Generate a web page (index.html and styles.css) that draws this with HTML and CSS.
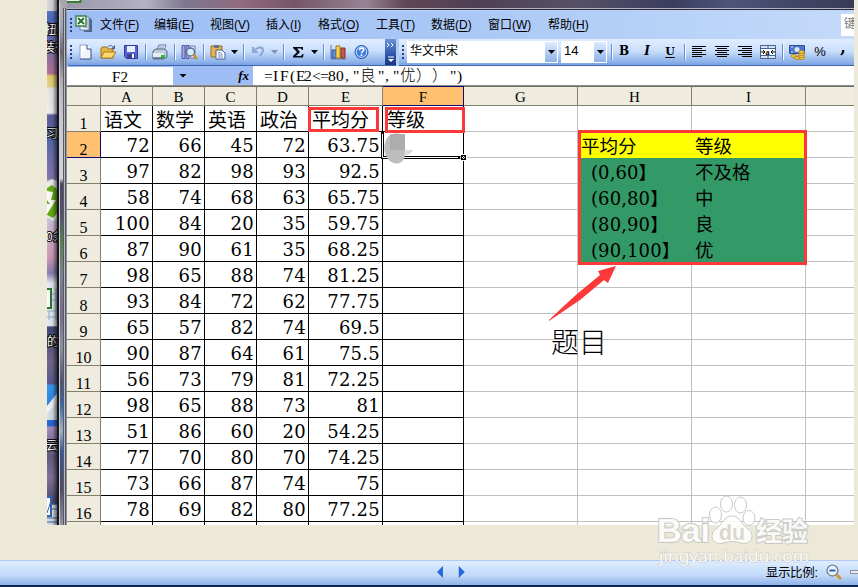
FILE: index.html
```html
<!DOCTYPE html>
<html lang="zh-CN">
<head>
<meta charset="utf-8">
<title>Excel</title>
<link rel="stylesheet" href="styles.css">
</head>
<body>
<div class="shot">
  <svg class="desktop" width="20" height="525" viewBox="47 0 20 525">
    <defs>
      <linearGradient id="dk" x1="0" y1="0" x2="0" y2="1">
        <stop offset="0" stop-color="#d8d7dc"/><stop offset=".02" stop-color="#dad9dd"/><stop offset=".022" stop-color="#5874c8"/><stop offset=".05" stop-color="#4868b4"/><stop offset=".09" stop-color="#7a6eae"/><stop offset=".14" stop-color="#b77598"/><stop offset=".145" stop-color="#e6cf6e"/><stop offset=".165" stop-color="#e6d684"/><stop offset=".168" stop-color="#e8e8e8"/><stop offset=".215" stop-color="#f2f2f2"/><stop offset=".22" stop-color="#6360a0"/><stop offset=".26" stop-color="#5368a8"/><stop offset=".34" stop-color="#8878b0"/><stop offset=".35" stop-color="#dfdce8"/><stop offset=".42" stop-color="#cfc4dc"/><stop offset=".49" stop-color="#d29cb8"/><stop offset=".52" stop-color="#8b80b4"/><stop offset=".54" stop-color="#e8eef5"/><stop offset=".62" stop-color="#e4edf4"/><stop offset=".623" stop-color="#444c7c"/><stop offset=".69" stop-color="#74688f"/><stop offset=".73" stop-color="#5c5b93"/><stop offset=".735" stop-color="#379bf2"/><stop offset=".81" stop-color="#2766d8"/><stop offset=".814" stop-color="#a590c0"/><stop offset=".87" stop-color="#675d85"/><stop offset=".91" stop-color="#84759d"/><stop offset=".96" stop-color="#4c4969"/><stop offset=".963" stop-color="#e0e9f0"/><stop offset="1" stop-color="#d4dde8"/>
      </linearGradient>
      <linearGradient id="glass" x1="0" y1="0" x2="0" y2="1">
        <stop offset="0" stop-color="#bab5bb"/><stop offset=".05" stop-color="#a4a4b4"/><stop offset=".1" stop-color="#70656e"/><stop offset=".16" stop-color="#b8b4b8"/><stop offset=".23" stop-color="#c8c9cf"/><stop offset=".34" stop-color="#d3d3da"/><stop offset=".35" stop-color="#4c4664"/><stop offset=".41" stop-color="#55506c"/><stop offset=".46" stop-color="#568249"/><stop offset=".52" stop-color="#7c8190"/><stop offset=".6" stop-color="#78698b"/><stop offset=".66" stop-color="#8c929c"/><stop offset=".73" stop-color="#535073"/><stop offset=".77" stop-color="#3b69a6"/><stop offset=".82" stop-color="#9fb1c0"/><stop offset=".86" stop-color="#36589a"/><stop offset=".93" stop-color="#54495f"/><stop offset="1" stop-color="#9298a0"/>
      </linearGradient>
      <linearGradient id="shade" x1="0" x2="1"><stop offset="0" stop-color="#000" stop-opacity="0"/><stop offset=".5" stop-color="#000" stop-opacity=".08"/><stop offset="1" stop-color="#000" stop-opacity=".65"/></linearGradient>
    </defs>
    <rect x="47" width="11" height="525" fill="url(#dk)"/>
    <path d="M47 182l5-3 6 3v36l-5 3-6-4z" fill="#eef3ec"/>
    <path d="M47 188l5-3 6 5v22l-5 6-6-3z" fill="#66b017"/>
    <path d="M47 191l6 1-2 8h5l-9 14v-10h3l-3-4z" fill="#fff"/>
    <path d="M47 289h4v19h-4" fill="#fff" stroke="#2b7b33" stroke-width="2"/>
    <path d="M52 294h6M52 300h6M47 311h11M47 317h11M56 288v32M49 311v9" stroke="#93b4d2" fill="none"/>
    <path d="M47 410l11-15v25H47z" fill="#d6e3eb"/><path d="M47 406l11-14v8l-11 14z" fill="#f4f7f9"/>
    <path d="M47 497h4v19h-4" fill="#fff" stroke="#3764ba" stroke-width="2"/>
    <path d="M47 513l4-12M52 503h6M52 509h6M47 518h11M47 522h11" stroke="#3e64a5" fill="none"/>
    <g class="desk-label"><text x="45" y="34">扭环</text><text x="43" y="52">装行</text><text x="46" y="138">习</text><text x="46" y="241">0条</text><text x="47" y="346">的</text><text x="46" y="450">云</text></g>
    <rect x="47" width="11" height="525" fill="url(#shade)"/>
    <rect x="57" width="2" height="525" fill="#171820"/>
    <rect x="59" width="4" height="525" fill="url(#glass)"/>
    <path d="M59.5 0v525" stroke="#c9cbd1"/><path d="M63.5 0v525" stroke="#555a66"/>
    <path d="M64.5 0v525" stroke="#b9bbc2"/><path d="M65.5 8v517" stroke="#525560"/><path d="M66.5 8v517" stroke="#93949b"/>
    <path d="M59 0h8v8h-4z" fill="#aaa4ae"/>
  </svg>
  <main class="app">
    <div class="title"><svg width="20" height="4" viewBox="0 0 20 4"><path d="M0 0h14v3H0z" fill="#e5efe5"/><path d="M0 2h14M13.5 0v3" stroke="#397c38" stroke-width="2"/></svg></div>
    <div class="menu">
      <i class="grip"></i>
      <svg class="book" width="18" height="18" viewBox="0 0 18 18"><path d="M7 3h8l2 2v12H9z" fill="#4c668a"/><path d="M5 2h9v13H5z" fill="#eaf0f6" stroke="#7288a8"/><path d="M10 5h3M10 7h3M10 9h3M8 12h5" stroke="#7892b8"/><path d="M1 1h10v10H1z" fill="#fff" stroke="#3d8044" stroke-width="1.4"/><path d="M3 3l6 6M9 3L3 9" stroke="#277634" stroke-width="2"/></svg>
      <nav><span>文件(<u>F</u>)</span><span>编辑(<u>E</u>)</span><span>视图(<u>V</u>)</span><span>插入(<u>I</u>)</span><span>格式(<u>O</u>)</span><span>工具(<u>T</u>)</span><span>数据(<u>D</u>)</span><span>窗口(<u>W</u>)</span><span>帮助(<u>H</u>)</span></nav>
      <div class="ask">键</div>
    </div>
    <div class="bars">
      <div class="bar standard">
        <i class="grip"></i>
        <svg class="ic first" viewBox="0 0 16 16"><path d="M3 1h7l4 4v10H3z" fill="#fff"/><path d="M3 15V1h7" stroke="#8da3c7" fill="none"/><path d="M10 1v4h4v10H3" stroke="#334d7d" fill="#dbe6f5" fill-opacity=".4"/></svg>
        <svg class="ic" viewBox="0 0 16 16"><path d="M1 4l2-1h4l1 2h5v9H1z" fill="#e5b83f" stroke="#9b701d"/><path d="M1 14l3-6h12l-4 6z" fill="#fbd96d" stroke="#a57a20"/><path d="M8 3c2-2 4-2 5 0" stroke="#46618b" fill="none"/><path d="M15 1v4h-4z" fill="#46618b"/></svg>
        <svg class="ic" viewBox="0 0 16 16"><path d="M1.500 1.500h13v13h-11l-2-2z" fill="#5964d2" stroke="#3039a0"/><path d="M4 2h8v6H4z" fill="#e9edfa"/><path d="M4 10h8v4H4z" fill="#37438c"/><path d="M9 10h2v4H9z" fill="#fff"/></svg>
        <i class="sep"></i>
        <svg class="ic" viewBox="0 0 16 16"><path d="M5 6l2-5h7l-2 5" fill="#fff" stroke="#61779e"/><path d="M7 3h5M6 5h5" stroke="#7892bf"/><path d="M1 7l3-2h9l2 2v6l-3 2H1z" fill="#bdc8d9" stroke="#56667f"/><path d="M1 9h11v4H1z" fill="#e8ecf2"/><path d="M9 11h4v3H9z" fill="#1fc02a"/><path d="M2 14h9" stroke="#3f5068"/></svg>
        <i class="sep"></i>
        <svg class="ic" viewBox="0 0 16 16"><path d="M1 1.500h3v13H1zM5 1.500h3v13H5z" fill="#a3a6de" stroke="#5459a5"/><path d="M8 2h6v12H8z" fill="#eef2fa" stroke="#6a75aa"/><circle cx="9.500" cy="8" r="4" fill="#d4ebfb" stroke="#536b93" stroke-width="1.300"/><path d="M12 10.500l4 4.500" stroke="#c58e23" stroke-width="2.500"/></svg>
        <i class="sep"></i>
        <svg class="ic" viewBox="0 0 16 16"><path d="M1 2h11v11H1z" fill="#e6b449" stroke="#987027"/><path d="M4 1h5v3H4z" fill="#67718b"/><path d="M6 6h6l3 3v6H6z" fill="#fff" stroke="#466195"/><path d="M8 9h4M8 11h5M8 13h5" stroke="#6c8bc2"/></svg>
        <i class="car"></i><i class="sep"></i>
        <svg class="ic" viewBox="0 0 16 16"><path d="M3 3v5h5M4 7c3-4 8-5 9-1 0 3-2 4-3 6" fill="none" stroke="#8ea9d4" stroke-width="2.200"/></svg>
        <i class="car off"></i><i class="sep"></i>
        <svg class="ic" viewBox="0 0 16 16"><path d="M3 3h10v3h-1l-1-1.500H7L10 8l-4 4h5l1.500-2h1L13 13.500H3V12l4-4-4-4z" fill="#070b19"/></svg>
        <i class="car"></i><i class="sep"></i>
        <svg class="ic" viewBox="0 0 16 16"><path d="M1 1v14h15" stroke="#5c739c" fill="none"/><path d="M2 6h4v8H2z" fill="#5791df" stroke="#2856a3"/><path d="M6 2h4v12H6z" fill="#f7d34c" stroke="#9b7721"/><path d="M11 4h4v10h-4z" fill="#cf574a" stroke="#823028"/></svg>
        <svg class="ic" viewBox="0 0 16 16"><circle cx="8.500" cy="8" r="6.500" fill="#397ce2" stroke="#2456a7"/><circle cx="8.500" cy="8" r="5.300" fill="none" stroke="#d8e9ff"/><path d="M6.500 6.200c0-3 4.200-2.600 4.200-.3 0 1.500-2.200 1.500-2.200 3.300M8.500 10.300v1.700" stroke="#fff" stroke-width="1.700" fill="none"/></svg>
        <div class="more"><svg width="11" height="26" viewBox="0 0 11 26"><path d="M2 4l2 2-2 2M6 4l2 2-2 2" stroke="#fff" fill="none"/><path d="M3 18h6" stroke="#fff"/><path d="M3 20h6l-3 3z" fill="#fff"/></svg></div>
      </div>
      <div class="bar format">
        <i class="grip"></i>
        <div class="combo family"><span>华文中宋</span><b><i class="car"></i></b></div>
        <div class="combo size"><span>14</span><b><i class="car"></i></b></div>
        <i class="sep"></i>
        <span class="ic ch bold">B</span><span class="ic ch ital">I</span><span class="ic ch under">U</span>
        <i class="sep"></i>
        <svg class="ic" viewBox="0 0 16 16"><path d="M1 2.500h14M1 4.500h10M1 6.500h14M1 8.500h10M1 10.500h14M1 12.500h10" stroke="#000"/></svg>
        <svg class="ic" viewBox="0 0 16 16"><path d="M1 2.500h14M3 4.500h10M1 6.500h14M3 8.500h10M1 10.500h14M3 12.500h10" stroke="#000"/></svg>
        <svg class="ic" viewBox="0 0 16 16"><path d="M1 2.500h14M5 4.500h10M1 6.500h14M5 8.500h10M1 10.500h14M5 12.500h10" stroke="#000"/></svg>
        <svg class="ic" viewBox="0 0 16 16"><path d="M.5 1.500h15v13H.5zM.5 4.500h15M.5 11.500h15M8 1.500v3M8 11.500v3" fill="#d9e4f5" stroke="#45638f"/><path d="M1 5h14v6H1z" fill="#fff"/><path d="M1 8h4M3 6l2 2-2 2M15 8h-4M13 6l-2 2 2 2" stroke="#000" fill="none"/><text x="5.500" y="10.500" class="tiny">a</text></svg>
        <i class="sep"></i>
        <svg class="ic" viewBox="0 0 16 16"><path d="M.5 1.500h15v8H.5z" fill="#4d78c9" stroke="#2c50a0"/><circle cx="8" cy="5.500" r="2.500" fill="#d8e7f9"/><path d="M2 3h2M2 8h2" stroke="#d8e7f9"/><g fill="#f4c843" stroke="#9e7418" stroke-width=".7"><ellipse cx="5" cy="12" rx="3" ry="1.500"/><ellipse cx="8" cy="14" rx="3" ry="1.500"/><ellipse cx="12.500" cy="14" rx="3" ry="1.500"/><ellipse cx="12.500" cy="12" rx="3" ry="1.500"/><ellipse cx="12.500" cy="10" rx="3" ry="1.500"/><ellipse cx="12.500" cy="8" rx="3" ry="1.500"/></g></svg>
        <span class="ic ch pct">%</span><span class="ic ch comma">,</span>
      </div>
    </div>
    <div class="formula">
      <div class="name">F2</div><i class="car"></i><span class="fx">fx</span>
      <svg class="expr" width="601" height="19" viewBox="0 0 601 19"><text y="15" x="11 20 27 37 43 51 59 67 75 83 92 100 107 125 132 140 147 163 179 197 204">=IF(E2&lt;=80,"良","优））")</text></svg>
    </div>
    <table>
      <colgroup><col class="c0"><col class="c1"><col class="c1"><col class="c1"><col class="c1"><col class="c5"><col class="c6"><col class="c7"><col class="c7"><col class="c7"><col class="c8"></colgroup>
      <thead><tr><th></th><th>A</th><th>B</th><th>C</th><th>D</th><th>E</th><th class="on">F</th><th>G</th><th>H</th><th>I</th><th></th></tr></thead>
      <tbody>
      <tr class="heads"><th>1</th><td>语文</td><td>数学</td><td>英语</td><td>政治</td><td class="wide">平均分</td><td>等级</td><td></td><td></td><td></td><td></td></tr>
      <tr><th class="on">2</th><td>72</td><td>66</td><td>45</td><td>72</td><td>63.75</td><td></td><td></td><td class="y">平均分</td><td class="y">等级</td><td></td></tr>
      <tr><th>3</th><td>97</td><td>82</td><td>98</td><td>93</td><td>92.5</td><td></td><td></td><td class="g range">(0,60】</td><td class="g">不及格</td><td></td></tr>
      <tr><th>4</th><td>58</td><td>74</td><td>68</td><td>63</td><td>65.75</td><td></td><td></td><td class="g range">(60,80】</td><td class="g">中</td><td></td></tr>
      <tr><th>5</th><td>100</td><td>84</td><td>20</td><td>35</td><td>59.75</td><td></td><td></td><td class="g range">(80,90】</td><td class="g">良</td><td></td></tr>
      <tr><th>6</th><td>87</td><td>90</td><td>61</td><td>35</td><td>68.25</td><td></td><td></td><td class="g range">(90,100】</td><td class="g">优</td><td></td></tr>
      <tr><th>7</th><td>98</td><td>65</td><td>88</td><td>74</td><td>81.25</td><td></td><td></td><td></td><td></td><td></td></tr>
      <tr><th>8</th><td>93</td><td>84</td><td>72</td><td>62</td><td>77.75</td><td></td><td></td><td></td><td></td><td></td></tr>
      <tr><th>9</th><td>65</td><td>57</td><td>82</td><td>74</td><td>69.5</td><td></td><td></td><td></td><td></td><td></td></tr>
      <tr><th>10</th><td>90</td><td>87</td><td>64</td><td>61</td><td>75.5</td><td></td><td></td><td></td><td></td><td></td></tr>
      <tr><th>11</th><td>56</td><td>73</td><td>79</td><td>81</td><td>72.25</td><td></td><td></td><td></td><td></td><td></td></tr>
      <tr><th>12</th><td>98</td><td>65</td><td>88</td><td>73</td><td>81</td><td></td><td></td><td></td><td></td><td></td></tr>
      <tr><th>13</th><td>51</td><td>86</td><td>60</td><td>20</td><td>54.25</td><td></td><td></td><td></td><td></td><td></td></tr>
      <tr><th>14</th><td>77</td><td>70</td><td>80</td><td>70</td><td>74.25</td><td></td><td></td><td></td><td></td><td></td></tr>
      <tr><th>15</th><td>73</td><td>66</td><td>87</td><td>74</td><td>75</td><td></td><td></td><td></td><td></td><td></td></tr>
      <tr><th>16</th><td>78</td><td>69</td><td>82</td><td>80</td><td>77.25</td><td></td><td></td><td></td><td></td><td></td></tr>
      <tr><th></th><td></td><td></td><td></td><td></td><td></td><td></td><td></td><td></td><td></td><td></td></tr>
      </tbody>
    </table>
  </main>
</div>
<footer>
  <svg class="nav" width="28" height="12" viewBox="0 0 28 12"><path d="M6 0v12L0 6z" fill="#2369dc"/><path d="M22 0v12l6-6z" fill="#2369dc"/></svg>
  <span class="zoom">显示比例:</span>
  <svg class="glass" width="16" height="16" viewBox="0 0 16 16"><path d="M10 10l5 5" stroke="#d29a2c" stroke-width="3"/><circle cx="6.500" cy="6.500" r="5.500" fill="#e6f3fc" stroke="#78828f" stroke-width="1.400"/><path d="M3.500 6.500h6" stroke="#315cb5" stroke-width="2"/></svg>
  <i class="track"></i>
</footer>
<svg class="notes" width="858" height="587" viewBox="0 0 858 587">
  <path d="M382.500 132v25.500H463" stroke="#000" stroke-width="3" fill="none"/>
  <path d="M382.500 134v23.500H458" stroke="#fff" fill="none"/>
  <path d="M460.500 154.500h6v6h-6z" fill="#fff"/><path d="M461 155h5v5h-5z" fill="#000"/><path d="M463.500 154v7M460 157.500h7" stroke="#fff" stroke-dasharray="1 1"/>
  <path d="M386 140c4-8 12-7 19-5v15h8c-2 3-5 5-8 5-1 11-14 11-18 2-4-6-3-12-1-17z" fill="#bdbdbe"/><path d="M390 134h15v16h-15z" fill="#a9a9ac" opacity=".8"/><path d="M405 150h8l-4 4-5 2z" fill="#dadada"/>
  <g fill="none" stroke="#fc3939" stroke-width="3"><path d="M309.500 108.500h68v22h-68zM386.500 108.500h77v23h-77zM579.500 131.500h226v132h-226z"/></g>
  <path d="M549 320Q567 303 577 294L600 275l-2-4 18-5-8 17-4-3-24 20-31 21z" fill="#fc3939"/>
  <text class="topic" x="551" y="353">题目</text>
  <g class="mark">
    <text class="logo" x="657" y="542" textLength="53" lengthAdjust="spacingAndGlyphs">Bai</text>
    <g fill="#fff" fill-opacity=".85" stroke="#c9c9c5"><ellipse cx="715.500" cy="515" rx="6" ry="8"/><ellipse cx="726.500" cy="504" rx="6" ry="8"/><ellipse cx="740.500" cy="505" rx="6" ry="8"/><ellipse cx="749" cy="518" rx="6" ry="7.500"/><path d="M732 516c8 0 10 9 16 13 8 6 3 17-7 14-6-2-12-2-18 0-10 3-15-8-7-14 6-4 8-13 16-13z"/></g>
    <text class="du" x="719" y="540" textLength="26" lengthAdjust="spacingAndGlyphs">du</text>
    <text class="exp" x="756" y="541">经验</text>
    <text class="url" x="659" y="562" textLength="150" lengthAdjust="spacingAndGlyphs">jingyan.baidu.com</text>
  </g>
</svg>
</body>
</html>
```
FILE: styles.css
```css
* { box-sizing: border-box; }
body { margin: 0; width: 858px; height: 587px; overflow: hidden; position: relative; display: flex; flex-direction: column; background: #ece9d8; font-family: "Liberation Sans", "Noto Sans CJK SC", sans-serif; color: #000; }
.shot { display: flex; width: 807px; height: 525px; flex: none; margin-left: 47px; overflow: hidden; }
.desktop { display: block; flex: none; }
.desk-label { fill: #fff; stroke: #111; stroke-width: 2px; paint-order: stroke; font: 12px "Noto Sans CJK SC", sans-serif; }
.app { width: 787px; height: 525px; overflow: hidden; background: #fff; }
.title { height: 10px; border-bottom: 1px solid #26283b; box-shadow: inset 0 -1px #b7afbc; background: linear-gradient(90deg, #999aa6, #aaa5bb 6%, #b5b1c3 10%, #7d7790 15%, #906b7e 22%, #755667 29%, #978293 38%, #614654 43%, #4e4054 52%, #565168 65%, #3b3d5e 77%, #4d5478 84%, #393a55); }
.title svg { display: block; }
.menu { height: 29px; display: flex; align-items: center; background: linear-gradient(90deg, #9ebdf5, #aac8f6 50%, #c4daf9); font-size: 12px; border-top: 1px solid #bcd3f9; }
.grip { width: 2px; height: 15px; flex: none; margin-left: 3px; background: repeating-linear-gradient(#29427f 0 2px, transparent 2px 4px); }
.book { margin-left: 3px; margin-top: -2px; }
.menu nav { display: grid; grid-template-columns: 54px 56px 56px 52px 58px 55px 57px 60px 60px; margin-left: 7px; line-height: 20px; white-space: nowrap; }
.menu u { text-underline-offset: 2px; }
.ask { margin-left: auto; width: 13px; height: 22px; background: #fff; color: #777; padding-left: 3px; overflow: hidden; line-height: 20px; }
.bars { display: flex; height: 27px; background: #b5cdf5; }
.bar { display: flex; align-items: center; height: 27px; background: linear-gradient(#e0edff, #cadffc 45%, #8fb3eb 87%, #78a0e0); border-bottom: 1px solid #3e65af; }
.bar .grip { margin-right: -2px; }
.standard { width: 329px; border-radius: 3px 0 0 3px; }
.format { width: 455px; margin-left: 3px; overflow: hidden; }
.ic { width: 16px; height: 16px; flex: none; margin-left: 7px; overflow: visible; }
.sep + .ic { margin-left: 5px; }
.first { margin-left: 7px; }
.sep { width: 2px; height: 16px; flex: none; margin-left: 6px; background: linear-gradient(90deg, #6a8ccb 50%, #f4f8ff 50%); }
.car { width: 7px; flex: none; margin-left: 5px; height: 4px; background: #000; clip-path: polygon(0 0, 100% 0, 50% 100%); }
.off { background: #7f91ae; }
.car + .sep { margin-left: 5px; }
.more { width: 11px; height: 26px; margin-left: 16px; background: linear-gradient(#6d93d8, #2b50a6 65%, #183780); }
.more svg { display: block; }
.combo { height: 22px; background: #fff; display: flex; justify-content: space-between; font-size: 12px; line-height: 20px; padding-left: 3px; flex: none; }
.combo b { width: 13px; background: linear-gradient(#deebff, #8eb2ea); display: flex; align-items: center; border: solid #fff; border-width: 1px 1px 1px 0; }
.combo .car { margin-left: 3px; }
.family { width: 151px; margin-left: 5px; }
.size { width: 46px; margin-left: 3px; font-size: 13px; }
.size + .sep { margin-left: 4px; }
.size + .sep + .ch { margin-left: 3px; }
.ch { font: bold 12px/15px "DejaVu Serif", serif; text-align: center; }
.bold { font-weight: 900; }
.ital { font-style: italic; }
.under { text-decoration: underline; text-underline-offset: 2px; font-size: 11px; }
.pct { font: 13px/16px "Liberation Sans", sans-serif; }
.comma { font-size: 16px; line-height: 8px; }
.tiny { font: bold 8px "Liberation Serif", serif; }
.formula { height: 20px; display: flex; align-items: center; background: #9ebdf5; border-bottom: 1px solid #8c8d88; }
.name { width: 106px; height: 18px; background: #fff; font: 15px/20px "Liberation Serif", serif; text-align: center; }
.formula .car { width: 8px; margin-left: 6px; }
.fx { width: 66px; text-align: right; font: italic bold 13px "Liberation Serif", serif; padding-right: 4px; }
.expr { display: block; background: #fff; }
.expr text { font: 300 15.5px "Liberation Serif", "Noto Sans CJK SC", serif; }
table { table-layout: fixed; width: 788px; border-collapse: separate; border-spacing: 0; }
.c0 { width: 34px; } .c1 { width: 52px; } .c5 { width: 74px; } .c6 { width: 81px; } .c7 { width: 114px; } .c8 { width: 49px; }
th, td { padding: 0; border: solid #c0c0c0; border-width: 0 1px 1px 0; white-space: nowrap; overflow: hidden; }
th { font: 15px/16px "Liberation Serif", serif; background: #efebde; border-color: #83816c; }
thead th { height: 20px; border-top: 1px solid #6f6e63; padding-top: 2px; }
tbody tr { height: 26px; }
tbody th { vertical-align: bottom; height: 26px; font-size: 16px; line-height: 15px; }
th.on { background: #ffc070; border-color: #0a0a78; }
td { height: 26px; font: 18px/23px "DejaVu Serif", "Noto Sans CJK SC", serif; letter-spacing: .25px; text-align: right; padding: 2px 2px 0 0; }
td:nth-child(-n+7) { border-color: #000; }
.heads td { font-size: 19px; letter-spacing: 0; text-align: left; padding: 4px 0 0 3px; line-height: 21px; }
.heads .wide ~ td { padding-left: 4px; }
td.y, td.g { text-align: left; letter-spacing: 0; font-size: 18.5px; padding: 4px 0 0 3px; line-height: 21px; }
td.y { background: #ff0; border-color: #ff0; }
td.g { background: #339966; border-color: #339966; }
td.range { padding-left: 13px; font-size: 18px; letter-spacing: .1px; }
footer { margin-top: 35px; height: 27px; flex: none; display: flex; align-items: center; background: linear-gradient(#e0edff, #c7defb 45%, #c3d9f8 60%, #8eb3e9); border-top: 1px solid #adc9f4; border-bottom: 2px solid #10264e; }
.nav { margin-left: 437px; margin-top: -2px; }
.zoom { margin-left: 301px; margin-top: -3px; width: 58px; font-size: 12.5px; white-space: nowrap; letter-spacing: -.3px; }
.glass { margin-left: 3px; margin-top: -3px; }
.track { width: 8px; height: 4px; background: #eee; border: 1px solid #8b9099; border-right: 0; margin-left: 8px; margin-top: -3px; flex: none; }
.notes { position: absolute; left: 0; top: 0; }
.topic { font: 300 28px "Noto Sans CJK SC", sans-serif; }
.mark text { fill: #fff; fill-opacity: .9; stroke: #c9c9c5; stroke-width: 2px; paint-order: stroke; }
.mark .logo { font: bold 34px "Liberation Sans", sans-serif; }
.mark .du { font: bold 22px "Liberation Sans", sans-serif; fill: #d4d3ca; stroke: none; }
.mark .exp { font: bold 26px "Noto Sans CJK SC", sans-serif; }
.mark .url { font: 17px "Noto Sans", sans-serif; stroke-width: 1px; }
```
